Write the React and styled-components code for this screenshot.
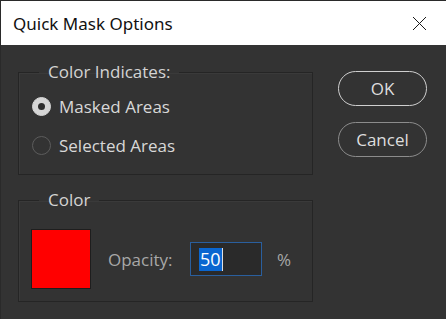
import React from "react";
import styled, { createGlobalStyle } from "styled-components";

const Global = createGlobalStyle`
  html, body {
    margin: 0;
    padding: 0;
    background: #333333;
  }
  #root {
    width: 446px;
    height: 319px;
  }
`;

const Window = styled.div`
  width: 446px;
  height: 319px;
  box-sizing: border-box;
  display: flex;
  flex-direction: column;
  background: #333333;
  border-top: 1px solid #2a2a2a;
  border-left: 1px solid #2a2a2a;
  font-family: "Open Sans", "Noto Sans", sans-serif;
  overflow: hidden;
`;

const TitleBar = styled.div`
  height: 44px;
  flex: none;
  background: #ffffff;
  display: flex;
  align-items: center;
  justify-content: space-between;
  padding: 0 19px 0 12px;
  color: #111;
  font-family: "Noto Sans", "Open Sans", sans-serif;
  font-size: 17px;
`;

const Body = styled.div`
  flex: 1;
  display: flex;
  padding: 16px 0 0 17px;
  gap: 25px;
`;

const Column = styled.div`
  display: flex;
  flex-direction: column;
  gap: 14px;
`;

const Group = styled.fieldset`
  margin: 0;
  width: 295px;
  box-sizing: border-box;
  border: 1px solid #252525;
  box-shadow: inset 1px 1px 0 #3a3a3a;
  padding: 0;
`;

const Legend = styled.legend`
  margin-left: 20px;
  padding: 0 9px;
  color: #d4d4d4;
  font-size: 17px;
  line-height: 22px;
`;

const Content = styled.div`
  padding: ${(p) => p.$pad};
`;

const RadioRow = styled.label`
  height: 39px;
  display: flex;
  align-items: center;
  gap: 8px;
  color: #d8d8d8;
  font-size: 17px;
`;

const Radio = styled.span`
  width: 19px;
  height: 19px;
  box-sizing: border-box;
  border-radius: 50%;
  display: flex;
  align-items: center;
  justify-content: center;
  background: ${(p) => (p.$checked ? "#d6d6d6" : "transparent")};
  border: 1px solid ${(p) => (p.$checked ? "#d6d6d6" : "#5c5c5c")};

  &::after {
    content: "";
    display: ${(p) => (p.$checked ? "block" : "none")};
    width: 7px;
    height: 7px;
    border-radius: 50%;
    background: #2e2e2e;
  }
`;

const ColorRow = styled.div`
  display: flex;
  align-items: center;
`;

const Swatch = styled.div`
  width: 60px;
  height: 60px;
  box-sizing: border-box;
  background: #ff0000;
  border: 1px solid #1e1e1e;
  margin-right: 17px;
`;

const FieldLabel = styled.span`
  color: #a8a8a8;
  font-size: 17px;
  width: 82px;
`;

const NumberInput = styled.div`
  width: 72px;
  height: 34px;
  box-sizing: border-box;
  border: 1px solid #2a5f9e;
  background: #2a2a2a;
  display: flex;
  align-items: center;
  padding-left: 8px;
  margin-right: 15px;
`;

const Selected = styled.span`
  background: #0a66d0;
  color: #ffffff;
  font-size: 18px;
  line-height: 23px;
  padding: 0 1px;
  border-right: 1px solid #e0e0e0;
`;

const Unit = styled.span`
  color: #a8a8a8;
  font-size: 17px;
`;

const Buttons = styled.div`
  display: flex;
  flex-direction: column;
  gap: 16px;
  padding-top: 10px;
`;

const Button = styled.button`
  width: 89px;
  height: 35px;
  border-radius: 18px;
  background: transparent;
  border: 1.5px solid ${(p) => (p.$primary ? "#cfcfcf" : "#8c8c8c")};
  color: #dedede;
  font-family: "Open Sans", "Noto Sans", sans-serif;
  font-size: 17px;
  padding: 0;
`;

export default function App() {
  return (
    <>
      <Global />
      <Window>
        <TitleBar>
          <span>Quick Mask Options</span>
          <svg width="15" height="15" viewBox="0 0 15 15">
            <path d="M1 1 L14 14 M14 1 L1 14" stroke="#1a1a1a" strokeWidth="1" />
          </svg>
        </TitleBar>
        <Body>
          <Column>
            <Group>
              <Legend>Color Indicates:</Legend>
              <Content $pad="4px 0 9px 13px">
                <RadioRow>
                  <Radio $checked />
                  Masked Areas
                </RadioRow>
                <RadioRow>
                  <Radio />
                  Selected Areas
                </RadioRow>
              </Content>
            </Group>
            <Group>
              <Legend>Color</Legend>
              <Content $pad="18px 0 12px 12px">
                <ColorRow>
                  <Swatch />
                  <FieldLabel>Opacity:</FieldLabel>
                  <NumberInput>
                    <Selected>50</Selected>
                  </NumberInput>
                  <Unit>%</Unit>
                </ColorRow>
              </Content>
            </Group>
          </Column>
          <Buttons>
            <Button $primary>OK</Button>
            <Button>Cancel</Button>
          </Buttons>
        </Body>
      </Window>
    </>
  );
}
